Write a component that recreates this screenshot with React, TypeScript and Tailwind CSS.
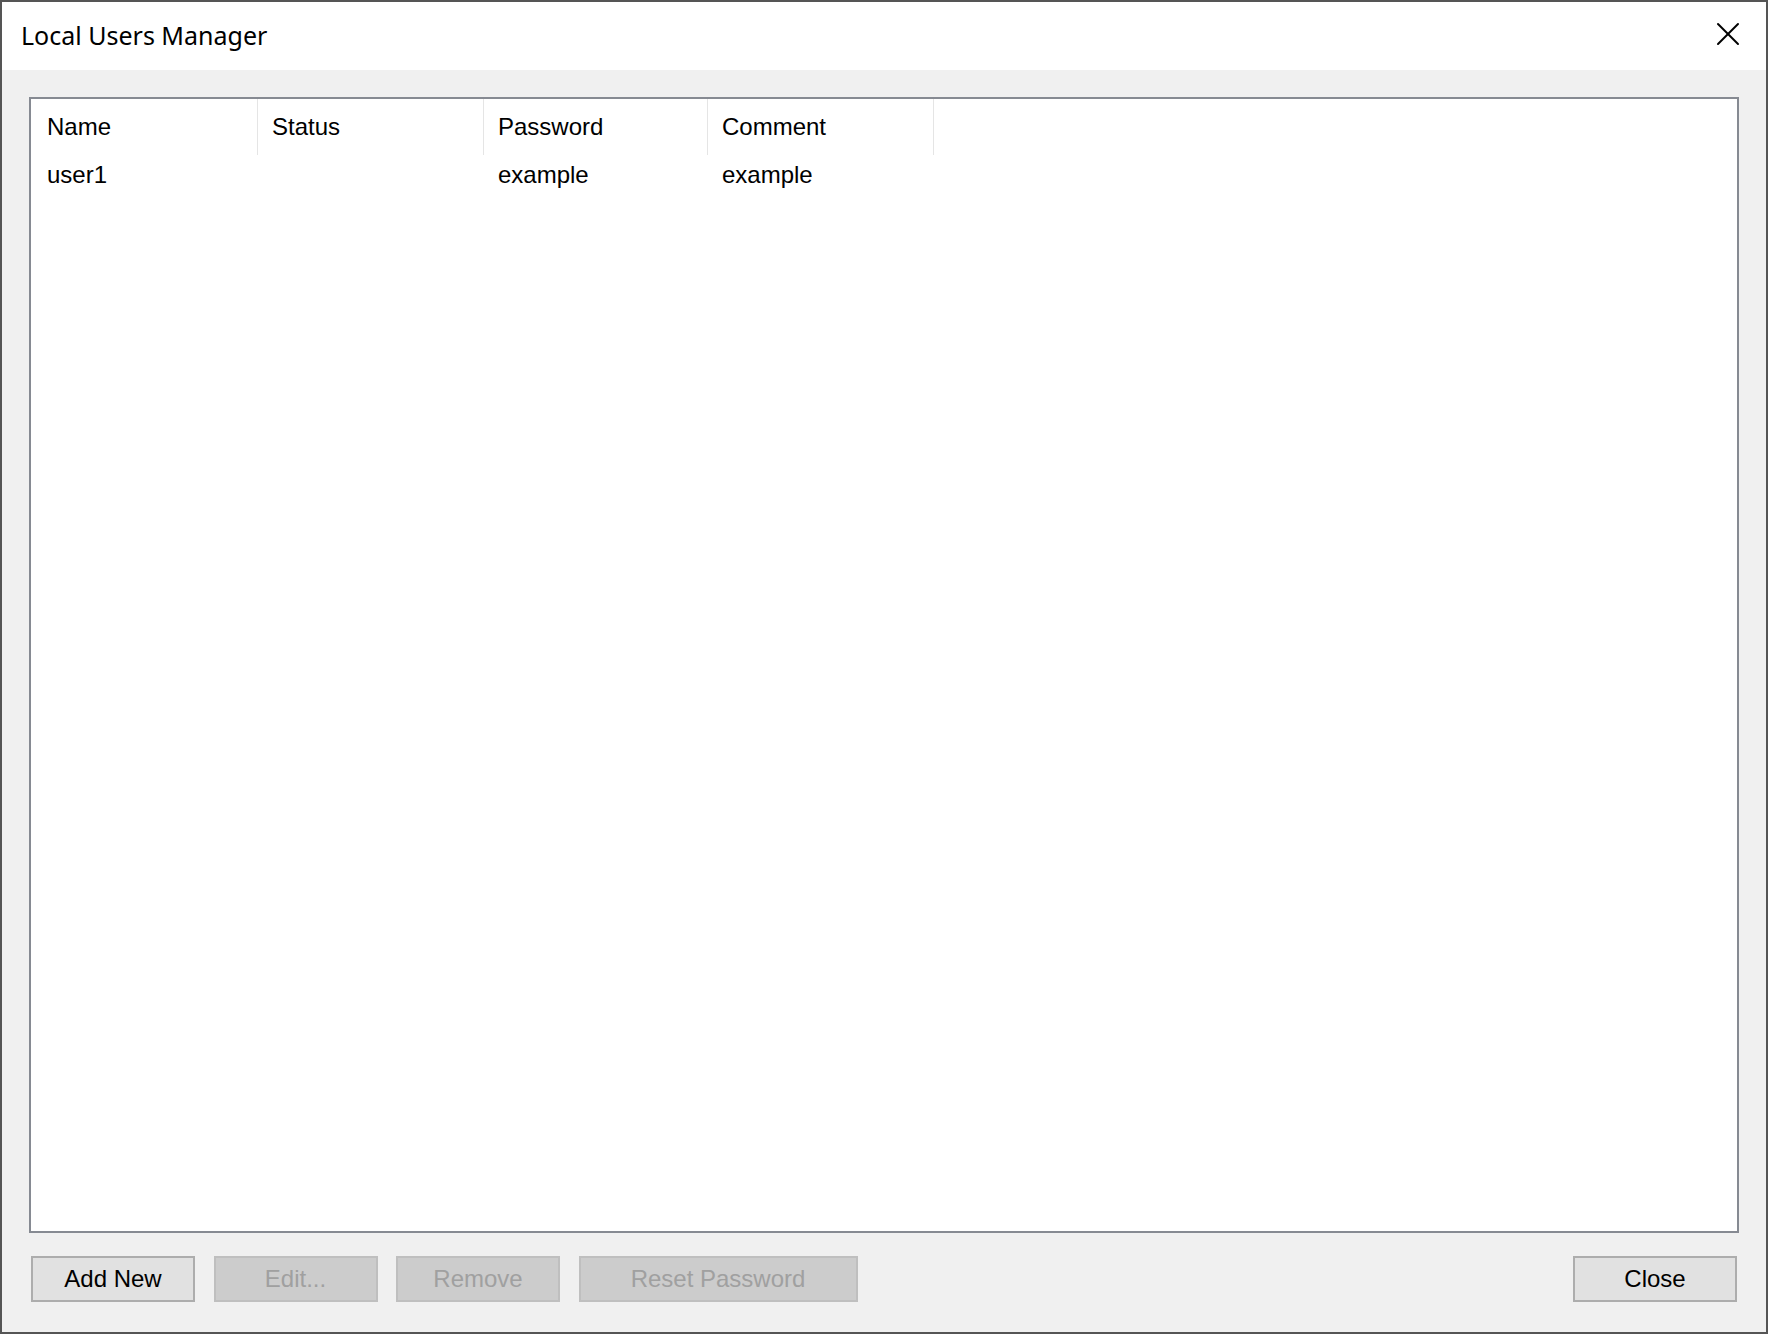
import { X } from "lucide-react";

interface Column {
  label: string;
  width: string;
  pad: string;
}

const columns: Column[] = [
  { label: "Name", width: "w-[227px]", pad: "pl-[16px]" },
  { label: "Status", width: "w-[226px]", pad: "pl-[14px]" },
  { label: "Password", width: "w-[224px]", pad: "pl-[14px]" },
  { label: "Comment", width: "w-[226px]", pad: "pl-[14px]" },
];

const rows = [["user1", "", "example", "example"]];

function Button({ label, width, disabled }: { label: string; width: string; disabled?: boolean }) {
  return (
    <button
      disabled={disabled}
      className={
        disabled
          ? `${width} h-[46px] border-2 border-[#bfbfbf] bg-[#cccccc] text-[#a0a0a0] text-[24px] leading-none`
          : `${width} h-[46px] border-2 border-[#adadad] bg-[#e1e1e1] text-black text-[24px] leading-none`
      }
    >
      {label}
    </button>
  );
}

export default function App() {
  return (
    <div className="w-[1768px] h-[1334px] flex flex-col border-2 border-[#555555] bg-[#f0f0f0] font-['Liberation_Sans',Arial,sans-serif]">
      {/* barra de título */}
      <div className="h-[68px] bg-white flex items-center justify-between pl-[19px] pr-[18px] shrink-0">
        <span className="text-[25px] text-black font-['Noto_Sans','Open_Sans',sans-serif]">
          Local Users Manager
        </span>
        <X size={40} strokeWidth={1.2} className="text-black mb-[4px]" />
      </div>

      <div className="flex-1 flex flex-col px-[27px] pt-[27px] pb-[30px] gap-[23px]">
        <div className="flex-1 border-2 border-[#868a92] bg-white flex flex-col">
          <div className="flex h-[56px]">
            {columns.map((col) => (
              <div
                key={col.label}
                className={`${col.width} ${col.pad} flex items-center border-r border-[#e5e5e5] text-[24px] text-black`}
              >
                {col.label}
              </div>
            ))}
          </div>
          {rows.map((row, i) => (
            <div key={i} className="flex h-[39px]">
              {row.map((cell, j) => (
                <div key={j} className={`${columns[j].width} ${columns[j].pad} flex items-center text-[24px] text-black`}>
                  {cell}
                </div>
              ))}
            </div>
          ))}
        </div>

        <div className="flex items-center pl-[2px] pr-[2px]">
          <div className="flex gap-[18.5px]">
            <Button label="Add New" width="w-[164px]" />
            <Button label="Edit..." width="w-[164px]" disabled />
            <Button label="Remove" width="w-[164px]" disabled />
            <Button label="Reset Password" width="w-[279px]" disabled />
          </div>
          <div className="ml-auto">
            <Button label="Close" width="w-[164px]" />
          </div>
        </div>
      </div>
    </div>
  );
}
